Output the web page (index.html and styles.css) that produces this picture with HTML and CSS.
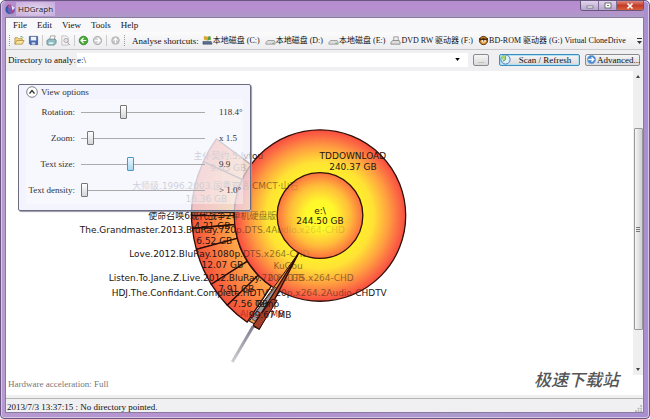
FILE: index.html
```html
<!DOCTYPE html>
<html lang="en">
<head>
<meta charset="utf-8">
<title>HDGraph</title>
<link rel="stylesheet" href="styles.css">
</head>
<body>
<div class="window">
  <header class="titlebar">
    <svg class="logo" viewBox="0 0 12 12"><circle cx="6" cy="6" r="5" fill="#6b62b8"/><path d="M6 6 2 1.500A5.500 5.500 0 0 1 6 0z" fill="#d94f8a"/><path d="M5 1a5 5 0 0 0 1 10A6 6 0 0 1 5 1z" fill="#2c5aa8"/><path d="M7 1l4 3-3 3z" fill="#eadcf5"/><circle cx="8" cy="8" r="1.500" fill="#c83d7d"/></svg>
    <h1 class="title">HDGraph</h1>
    <div class="caption">
      <button class="cap" aria-label="Minimize"><svg viewBox="0 0 10 8"><rect x="2" y="4" width="6" height="2" fill="#fff" stroke="#555" stroke-width=".6"/></svg></button>
      <button class="cap" aria-label="Maximize"><svg viewBox="0 0 10 8"><rect x="2" y="1" width="6" height="5" fill="#fff" stroke="#555" stroke-width=".8"/><path d="M4 3h2v1H4z" fill="#777"/></svg></button>
      <button class="cap close" aria-label="Close"><svg viewBox="0 0 10 8"><path d="M2.500 1.500l5 5m0-5l-5 5" stroke="#fff" stroke-width="1.600"/></svg></button>
    </div>
  </header>
  <main class="client">
    <nav class="menu">
      <a href="#">File</a><a href="#">Edit</a><a href="#">View</a><a href="#">Tools</a><a href="#">Help</a>
    </nav>
    <div class="toolbar">
      <span class="grip"></span>
      <button class="tool" aria-label="Open"><svg viewBox="0 0 12 12"><path d="M1 10V3h3l1 1h4v2" fill="#f7d77a" stroke="#9c7a2a" stroke-width=".7"/><path d="M1 10l2-4h8l-2 4z" fill="#fbe49a" stroke="#9c7a2a" stroke-width=".7"/><path d="M7 2q2-1 3 1" fill="none" stroke="#4aa34a"/></svg></button>
      <button class="tool" aria-label="Save"><svg viewBox="0 0 12 12"><path d="M1.500 1.500h9v9h-8l-1-1z" fill="#4668ad" stroke="#2d4380" stroke-width=".7"/><path d="M3 2h6v4H3z" fill="#edf2fb"/><path d="M4 8h4v2.500H4z" fill="#cbd4e6"/></svg></button>
      <span class="sep"></span>
      <button class="tool" aria-label="Print"><svg viewBox="0 0 12 12"><path d="M4 5l1-4h5L9 5" fill="#fff" stroke="#777" stroke-width=".7"/><path d="M1 6l2-1.500h7l1 1V9L9 11H2L1 10z" fill="#8fbcc0" stroke="#4b7276" stroke-width=".7"/><path d="M3 8h5v2H3z" fill="#e6f3f3"/></svg></button>
      <button class="tool" aria-label="Preview"><svg viewBox="0 0 12 12"><path d="M2 1h5l2 2v8H2z" fill="#f5f3f5" stroke="#aaa" stroke-width=".7"/><circle cx="6.500" cy="6" r="2.300" fill="#e9e3ea" stroke="#999" stroke-width=".8"/><path d="M8 8l3 3" stroke="#b99"/></svg></button>
      <span class="sep"></span>
      <button class="tool" aria-label="Back"><svg viewBox="0 0 12 12"><circle cx="6" cy="6" r="4.700" fill="#4da93c" stroke="#2c7b25" stroke-width=".8"/><path d="M9 6H3.500M6 3.300L3.300 6 6 8.700" fill="none" stroke="#fff" stroke-width="1.300"/></svg></button>
      <button class="tool" aria-label="Forward"><svg viewBox="0 0 12 12"><circle cx="6" cy="6" r="4.500" fill="#d2d2d2" stroke="#999" stroke-width=".8"/><path d="M3 6h5.500M6 3.300L8.700 6 6 8.700" fill="none" stroke="#fff" stroke-width="1.300"/></svg></button>
      <span class="sep"></span>
      <button class="tool" aria-label="Up"><svg viewBox="0 0 12 12"><circle cx="6" cy="6" r="4.200" fill="#c4c4c4" stroke="#aaa" stroke-width=".8"/><path d="M6 9V3.500M3.700 6L6 3.500 8.300 6" fill="none" stroke="#fff" stroke-width="1.200"/></svg></button>
      <span class="grip"></span>
      <span class="caption-text">Analyse shortcuts:</span>
      <div class="drives">
        <button class="drive"><svg viewBox="0 0 12 12"><path d="M2 1l4 1v4L2 5z" fill="#d9a62c"/><path d="M6 2l3-1 1 4-4 1z" fill="#5a9c44"/><path d="M1 7h9l1 3H1z" fill="#556e9c" stroke="#444" stroke-width=".6"/></svg>本地磁盘 (C:)</button>
        <button class="drive"><svg viewBox="0 0 12 12"><path d="M1 8l2-2h7l1 2v2H1z" fill="#ddd" stroke="#888" stroke-width=".8"/><path d="M8 9h2" stroke="#5a5"/></svg>本地磁盘 (D:)</button>
        <button class="drive"><svg viewBox="0 0 12 12"><path d="M1 8l2-2h7l1 2v2H1z" fill="#ddd" stroke="#888" stroke-width=".8"/><path d="M8 9h2" stroke="#5a5"/></svg>本地磁盘 (E:)</button>
        <button class="drive"><svg viewBox="0 0 12 12"><path d="M4 2h5v5H4z" fill="#eee" stroke="#888" stroke-width=".8"/><path d="M1 8l2-2h7l1 2v2H1z" fill="#ddd" stroke="#777" stroke-width=".8"/></svg>DVD RW 驱动器 (F:)</button>
        <button class="drive"><svg viewBox="0 0 12 12"><circle cx="6" cy="6" r="4.500" fill="#d98b24" stroke="#4c2a0c"/><path d="M1 3l3 1 2-1 2 1 3-1-1 3H2z" fill="#4c2a0c"/><path d="M4 6h1.500v1H4zm3 0h1.500v1H7zM4 8.500h4" fill="#fff" stroke="#fff" stroke-width=".6"/></svg>BD-ROM 驱动器 (G:) Virtual CloneDrive</button>
      </div>
      <button class="more" aria-label="More"><svg viewBox="0 0 5 6"><path d="M0 0h5v1H0zM0 3h5L2.500 6z" fill="#333"/></svg></button>
    </div>
    <form class="address">
      <label class="dir" for="path">Directory to analy:</label>
      <input class="path" id="path" value="e:\">
      <button class="drop" type="button" aria-label="Recent directories"><svg viewBox="0 0 6 4"><path d="M0 0h6L3 4z"/></svg></button>
      <button class="btn dots" type="button">...</button>
      <button class="btn scan" type="button"><svg viewBox="0 0 12 12"><circle cx="6" cy="6" r="5" fill="#dff0fb" stroke="#3478b8"/><path d="M6 2.500V6L3 8" fill="none" stroke="#287a3a"/><path d="M6 1a5 5 0 0 0-5 5h5z" fill="#a9d66b"/></svg><span>Scan / Refresh</span></button>
      <button class="btn adv" type="button"><svg viewBox="0 0 12 12"><circle cx="6" cy="6" r="4.500" fill="#3f83d1" stroke="#7aa9dc"/><path d="M2.500 6h5M6 3.500L8.500 6 6 8.500" fill="none" stroke="#fff" stroke-width="1.400"/></svg>Advanced...</button>
    </form>
    <section class="work">
      <div class="canvas">
        <svg class="chart" viewBox="5 70 629 305" preserveAspectRatio="xMinYMin meet">
          <defs>
            <radialGradient id="core" gradientUnits="userSpaceOnUse" cx="320" cy="215" r="43"><stop offset="0" stop-color="#ffff24"/><stop offset=".35" stop-color="#fff92c"/><stop offset=".7" stop-color="#ffb53c"/><stop offset="1" stop-color="#fb5a42"/></radialGradient>
            <radialGradient id="ring" gradientUnits="userSpaceOnUse" cx="320" cy="215" r="86"><stop offset=".5" stop-color="#ffee2c"/><stop offset=".62" stop-color="#ffe334"/><stop offset=".8" stop-color="#ffa040"/><stop offset=".93" stop-color="#fb6844"/><stop offset="1" stop-color="#f84c3e"/></radialGradient>
            <radialGradient id="outer" gradientUnits="userSpaceOnUse" cx="320" cy="215" r="129"><stop offset=".66" stop-color="#ffad48"/><stop offset=".82" stop-color="#ff8242"/><stop offset="1" stop-color="#f2503a"/></radialGradient>
            <linearGradient id="stick" gradientUnits="userSpaceOnUse" x1="254" y1="324" x2="232" y2="362"><stop offset="0" stop-color="#77778c"/><stop offset="1" stop-color="#d0d0d0"/></linearGradient>
          </defs>
          <g fill="url(#outer)" stroke="#2b0c06" stroke-width="1.300" stroke-linejoin="round">
            <path d="M216 138A129 129 0 0 0 203 161L242 179A86 86 0 0 1 251 164z"/>
            <path d="M203 161A129 129 0 0 0 191 211L234 212A86 86 0 0 1 242 179z"/>
            <path d="M191 211V215H234V212z"/>
            <path d="M191 215A129 129 0 0 0 192 228L235 224A86 86 0 0 1 234 215z"/>
            <path d="M192 228A129 129 0 0 0 196 249L237 238A86 86 0 0 1 235 224z"/>
            <path d="M196 249A129 129 0 0 0 211 284L247 261A86 86 0 0 1 237 238z"/>
            <path d="M211 284A129 129 0 0 0 227 305L258 275A86 86 0 0 1 247 261z"/>
            <path d="M227 305A129 129 0 0 0 247 322L271 286A86 86 0 0 1 258 275z"/>
          </g>
          <circle cx="320" cy="215" r="86" fill="url(#ring)"/>
          <circle cx="320" cy="215" r="43" fill="url(#core)"/>
          <g class="names">
            <text x="228" y="158">主仆契约.5.lvtou</text><text x="228" y="170">9.63 GB</text>
            <text x="215" y="188">大师级.1996.2003.国粤双语.CMCT·山石</text><text x="206" y="201">16.36 GB</text>
            <text x="212" y="218">使命召唤6现代战争2单机硬盘版</text><text x="212" y="229">4.21 GB</text>
            <text x="212" y="233">The.Grandmaster.2013.BluRay.720p.DTS.4Audio.x264-CHD</text><text x="214" y="244">6.52 GB</text>
            <text x="219" y="257">Love.2012.BluRay.1080p.DTS.x264-CHD</text><text x="222" y="268">12.07 GB</text>
            <text x="288" y="269">KuGou</text><text x="286" y="281">0.88 GB</text>
            <text x="231" y="281">Listen.To.Jane.Z.Live.2012.BluRay.720p.DTS.x264-CHD</text><text x="236" y="292">7.91 GB</text>
            <text x="249" y="296">HDJ.The.Confidant.Complete.HDTV.720p.x264.2Audio-CHDTV</text>
          </g>
          <circle cx="320" cy="215" r="86" fill="url(#ring)" fill-opacity=".5" stroke="#30100a" stroke-width="1.300"/>
          <path d="M299 252L249 321 257 325z" fill="#f29a42" stroke="#2b0c06"/>
          <path d="M275 287L251 318 255 321 280 290z" fill="#9a9aa2" stroke="#333" stroke-width=".8"/>
          <path d="M299 252L253 326 259 329z" fill="#b14a2c" stroke="#2b0c06" stroke-width="1.300"/>
          <path d="M272 299L253 325 259 329 277 300z" fill="#a5402c" stroke="#2b0c06"/>
          <path d="M253 326L232 362" stroke="url(#stick)" stroke-width="3"/>
          <circle cx="320" cy="215" r="43" fill="url(#core)" fill-opacity=".7" stroke="#30100a" stroke-width="1.300"/>
          <g class="names">
            <text x="353" y="158">TDDOWNLOAD</text><text x="353" y="169">240.37 GB</text>
            <text x="320" y="213">e:\</text><text x="320" y="224">244.50 GB</text>
            <text x="250" y="307">7.56 GB</text><text x="267" y="307">Temp</text>
            <text class="hot-name" x="262" y="317">Alipay MB</text><text x="270" y="318">99.67 MB</text>
          </g>
        </svg>
        <fieldset class="panel">
          <legend class="panel-head"><button class="fold" type="button" aria-label="Collapse"><svg viewBox="0 0 12 12"><circle cx="6" cy="6" r="5.300" fill="#fff" stroke="#666" stroke-width=".8"/><path d="M3.500 7.500L6 4.500 8.500 7.500" fill="none" stroke="#333" stroke-width="1.300"/></svg></button>View options</legend>
          <div class="options">
            <label for="rot">Rotation:</label><input id="rot" type="range" min="0" max="360" value="121"><output>118.4°</output>
            <label for="zm">Zoom:</label><input id="zm" type="range" min="0" max="100" value="5"><output>x 1.5</output>
            <label for="ts">Text size:</label><input id="ts" class="hot" type="range" min="0" max="100" value="39"><output>9.9</output>
            <label for="td">Text density:</label><input id="td" type="range" min="0" max="100" value="0"><output>&gt; 1.0°</output>
          </div>
        </fieldset>
      </div>
      <div class="scrollbar"><span class="arrow up"></span><span class="thumb"></span><span class="arrow down"></span></div>
    </section>
    <p class="accel">Hardware acceleration: Full</p>
    <span class="mark">极速下载站</span>
    <footer class="status"><span>2013/7/3 13:37:15 : No directory pointed.</span><svg class="size" viewBox="0 0 8 8"><path d="M6 0h2v2H6zM3 3h2v2H3zM6 3h2v2H6zM0 6h2v2H0zM3 6h2v2H3zM6 6h2v2H6z" fill="#b5b5b5"/></svg></footer>
  </main>
</div>
</body>
</html>
```
FILE: styles.css
```css
* { box-sizing: border-box; }
body { margin: 0; font: 9px/12px "Liberation Serif", "Noto Sans CJK SC", serif; color: #111; background: #fff; }
button, input { font: inherit; color: inherit; margin: 0; padding: 0; }
button { border: 0; background: none; display: flex; align-items: center; }
svg { display: block; }
.window { height: 100vh; display: flex; flex-direction: column; padding: 0 5px 5px 4px; border: 1px solid #67557f; border-radius: 5px 5px 4px 4px; background: linear-gradient(90deg, #b69ad0, #b48fd0 40%, #ab9bcc 70%, #a98fd0); box-shadow: inset 0 0 0 1px #d8c8e8; }
.titlebar { display: flex; align-items: center; height: 16px; flex: none; background: linear-gradient(#b58cce, #b88fd0 50%, #ab9ac6); }
.logo { width: 11px; height: 11px; }
.title { margin: 0; padding: 0 2px; font: 8px/14px "Open Sans", sans-serif; color: #222; background: radial-gradient(#e6d6f0, #c9b0dc 90%); }
.caption { display: flex; align-self: flex-start; margin-left: auto; border: 1px solid #66577a; border-top: 0; border-radius: 0 0 3px 3px; overflow: hidden; }
.cap { width: 18px; height: 9px; justify-content: center; background: linear-gradient(#e0d4ec, #b8a5cf); border-right: 1px solid #7b6c90; }
.cap svg { width: 10px; height: 8px; }
.close { width: 26px; border: 0; background: linear-gradient(#dd8a7c, #c43c28 50%, #d8603c); }
.client { flex: 1; min-height: 0; display: flex; flex-direction: column; position: relative; background: #fff; border: 1px solid #8a7aa0; }
.menu { display: flex; gap: 10px; padding: 1px 7px 0; height: 14px; background: #f8f7fa; }
.menu a { color: inherit; text-decoration: none; }
.toolbar { display: flex; align-items: center; gap: 3px; height: 18px; padding: 0 1px 0 3px; white-space: nowrap; background: linear-gradient(#fbfbfc, #ededf0); border-bottom: 1px solid #c9c9cc; }
.grip { flex: none; width: 2px; height: 11px; border-left: 1px dotted #999; }
.sep { flex: none; width: 1px; height: 11px; background: #ccc; }
.tool svg { width: 11px; height: 11px; }
.caption-text { margin-left: 3px; }
.drives { display: flex; gap: 5px; font-size: 8px; }
.drive svg { width: 11px; height: 11px; }
.more { margin-left: auto; }
.more svg { width: 5px; height: 6px; }
.address { display: flex; align-items: center; height: 21px; padding: 0 3px 2px 2px; background: #f0f0f2; }
.dir { flex: none; width: 69px; overflow: hidden; white-space: nowrap; }
.path { flex: 1; min-width: 0; height: 14px; border: 0; background: #fff; outline: 0; }
.drop { width: 13px; height: 14px; background: #fff; }
.drop svg { width: 5px; height: 3px; }
.btn { height: 12px; border: 1px solid #8c8c90; border-radius: 2px; background: linear-gradient(#f6f6f6, #d9d9dc); white-space: nowrap; }
.btn svg { width: 11px; height: 11px; flex: none; }
.dots { width: 16px; margin-left: 5px; justify-content: center; color: #888; }
.scan { width: 81px; margin-left: 10px; border-color: #3d8fc0; box-shadow: inset 0 0 0 1px #aee0f5; }
.scan span { flex: 1; text-align: center; }
.adv { width: 55px; margin-left: 5px; }
.work { flex: 1; min-height: 0; display: flex; }
.canvas { flex: 1; min-width: 0; position: relative; }
.chart { width: 100%; }
.names { font: 9px "DejaVu Sans", "Noto Sans CJK SC", sans-serif; text-anchor: middle; fill: #1d1512; }
.hot-name { fill: #c03020; }
.panel { position: absolute; left: 12px; top: 13px; width: 233px; height: 127px; margin: 0; padding: 0 7px 7px; border: 1px solid #6c6c80; border-radius: 2px; background: rgba(238, 240, 253, .7); box-shadow: 1px 1px 1px #9999a8; color: #333; }
.panel-head { float: left; display: flex; align-items: center; gap: 3px; width: 100%; height: 14px; padding: 0; }
.fold svg { width: 12px; height: 12px; }
.options { clear: both; display: grid; grid-template-columns: 49px 124px 1fr; column-gap: 6px; grid-auto-rows: 26px; align-items: center; height: 105px; background: rgba(252, 252, 255, .4); }
.options label { text-align: right; white-space: nowrap; }
.options output { padding-left: 8px; white-space: nowrap; }
input[type="range"] { appearance: none; width: 100%; height: 14px; background: linear-gradient(#aaa, #aaa) center / 100% 1px no-repeat; }
input[type="range"]::-webkit-slider-thumb { appearance: none; width: 7px; height: 14px; border: 1px solid #777; border-radius: 1px; background: linear-gradient(#fff, #d5d5d8); }
input[type="range"].hot::-webkit-slider-thumb { border-color: #4a96c4; background: linear-gradient(#eaf7ff, #a8d8f2); }
.scrollbar { width: 10px; display: flex; flex-direction: column; align-items: center; background: #efeff0; }
.arrow { border: 2px solid transparent; }
.up { border-bottom: 3px solid #444; margin: 2px 0 50px; }
.down { border-top: 3px solid #444; margin: auto 0 2px; }
.thumb { width: 9px; height: 202px; border: 1px solid #999; border-radius: 1px; background: repeating-linear-gradient(#777 0 1px, transparent 1px 2px) center / 4px 5px no-repeat, linear-gradient(90deg, #f6f6f6, #cfcfd2); }
.accel { margin: 0; padding: 3px 2px 5px; height: 20px; color: #777; }
.mark { position: absolute; right: 24px; bottom: 23px; font: italic 500 17px/20px "Noto Sans CJK SC", sans-serif; color: #555; }
.status { display: flex; justify-content: space-between; height: 17px; padding: 3px 1px 0; border-top: 3px solid #f0f0f0; background: #f0eff2; box-shadow: inset 0 1px #b5b5b8; }
.size { width: 7px; height: 7px; align-self: flex-end; }
```
